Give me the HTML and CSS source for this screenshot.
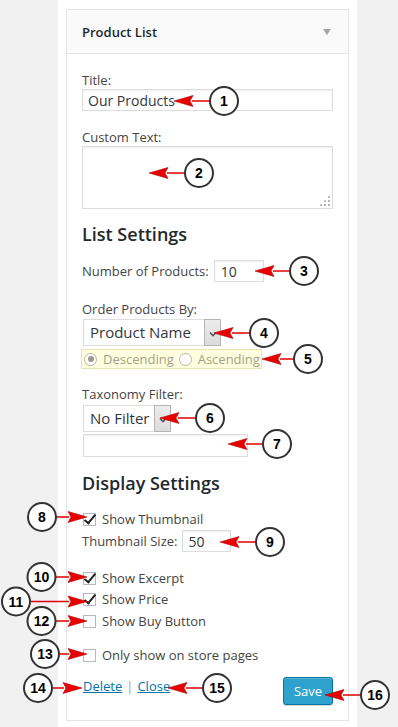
FILE: index.html
```html
<!DOCTYPE html>
<html lang="en">
<head>
  <meta charset="UTF-8" />
  <title>Product List widget</title>
  <link rel="stylesheet" href="styles.css">
</head>
<body>
<div class="page">
  <div class="column">
    <div class="widget">
      <div class="widget-top">
        <h3 class="widget-title">Product List</h3>
        <span class="toggle"></span>
      </div>

      <div class="widget-inside">
        <label class="label">Title:</label>
        <input class="text-input wide" type="text" value="Our Products">

        <label class="label gap-lg">Custom Text:</label>
        <div class="textarea"><span class="grip"></span></div>

        <h4 class="section-title">List Settings</h4>
        <div class="inline-row gap-num">
          <label>Number of Products:</label>
          <input class="text-input small num" type="text" value="10">
        </div>

        <label class="label gap-order">Order Products By:</label>
        <div class="select order-select">
          <span class="select-value">Product Name</span>
          <span class="select-btn"><svg width="8" height="6" viewBox="0 0 8 6"><polyline points="1,1.5 4,4.5 7,1.5" fill="none" stroke="#555" stroke-width="1.6"/></svg></span>
        </div>
        <div class="radio-box">
          <span class="radio checked"></span><span class="radio-text">Descending</span>
          <span class="radio"></span><span class="radio-text">Ascending</span>
        </div>

        <label class="label gap-tax">Taxonomy Filter:</label>
        <div class="select tax-select">
          <span class="select-value">No Filter</span>
          <span class="select-btn"><svg width="8" height="6" viewBox="0 0 8 6"><polyline points="1,1.5 4,4.5 7,1.5" fill="none" stroke="#555" stroke-width="1.6"/></svg></span>
        </div>
        <input class="text-input term-input" type="text" value="">

        <h4 class="section-title gap-display">Display Settings</h4>
        <div class="check-row gap-thumb"><span class="check on"></span>Show Thumbnail</div>
        <div class="inline-row gap-size">
          <label>Thumbnail Size:</label>
          <input class="text-input small thumb" type="text" value="50">
        </div>
        <div class="check-row gap-excerpt"><span class="check on"></span>Show Excerpt</div>
        <div class="check-row gap-price"><span class="check on"></span>Show Price</div>
        <div class="check-row gap-buy"><span class="check"></span>Show Buy Button</div>
        <div class="check-row gap-store"><span class="check"></span>Only show on store pages</div>

        <div class="widget-actions">
          <div class="links"><a href="#">Delete</a><span class="sep">|</span><a href="#">Close</a></div>
          <button class="btn-save">Save</button>
        </div>
      </div>
    </div>
  </div>

  <svg id="callouts" class="callouts" width="398" height="727" viewBox="0 0 398 727"></svg>
</div>

<script>
  // callout: [number, circleX, circleY, arrowTipX]
  const callouts = [
    [1, 224, 101, 174], [2, 199, 173, 149], [3, 304, 271, 255],
    [4, 264, 333, 214], [5, 308, 359, 262], [6, 210, 418, 160],
    [7, 277, 444, 228], [8, 42, 517, 87],   [9, 270, 542, 220],
    [10, 41.5, 577, 87], [11, 16, 601.5, 87], [12, 41.5, 621, 87],
    [13, 45, 654, 87],  [14, 38, 688, 82],  [15, 217, 688, 168],
    [16, 375, 695, 325]
  ];
  const svg = document.getElementById('callouts');
  const NS = 'http://www.w3.org/2000/svg';
  const R = 14, HEAD = 19, HALF = 5.5;

  function el(tag, attrs, text){
    const n = document.createElementNS(NS, tag);
    for (const k in attrs) n.setAttribute(k, attrs[k]);
    if (text !== undefined) n.textContent = text;
    svg.appendChild(n);
    return n;
  }

  callouts.forEach(([num, cx, cy, tip]) => {
    const dir = cx > tip ? 1 : -1;        // 1: circle on the right, arrow points left
    const base = tip + dir * HEAD;
    const edge = cx - dir * R;
    el('line', { x1: base - dir, y1: cy, x2: edge, y2: cy, class: 'co-line' });
    el('polygon', { points: `${tip},${cy} ${base},${cy - HALF} ${base - dir * 3},${cy} ${base},${cy + HALF}`, class: 'co-head' });
    el('circle', { cx, cy, r: R, class: 'co-circle' });
    el('text', { x: cx, y: cy + 5, class: 'co-num' }, num);
  });
</script>
</body>
</html>
```

FILE: styles.css
```css
* { box-sizing: border-box; }
html, body { margin: 0; }
body {
  background: #f1f1f1;
  font-family: "Open Sans", "Liberation Sans", sans-serif;
  font-size: 13px;
  line-height: 18px;
  color: #444;
}

.page { position: relative; width: 398px; height: 727px; overflow: hidden; }
.column { margin-left: 58px; width: 299px; min-height: 727px; background: #fff; padding: 9px 8px 0; }

.widget { border: 1px solid #e5e5e5; background: #fff; }
.widget-top {
  height: 44px;
  background: #fafafa;
  border-bottom: 1px solid #e5e5e5;
  display: flex;
  align-items: center;
  justify-content: space-between;
  padding: 1px 17px 0 15px;
}
.widget-title { margin: 0; font-size: 13px; font-weight: 600; color: #23282d; }
.toggle { width: 0; height: 0; border-left: 4px solid transparent; border-right: 4px solid transparent; border-top: 6px solid #a0a5aa; }

.widget-inside { padding: 17px 15px 15px; display: flex; flex-direction: column; }

.label { display: block; }
.gap-lg { margin-top: 17px; }
.gap-order { margin-top: 18px; }
.gap-tax { margin-top: 16px; }

/* inputs */
.text-input {
  display: block;
  height: 22px;
  margin: 0;
  border: 1px solid #ddd;
  padding: 0 5px;
  font-family: inherit;
  font-size: 14px;
  color: #32373c;
  background: #fff;
  box-shadow: inset 0 1px 2px rgba(0,0,0,.07);
  outline: none;
}
.text-input.wide { width: 100%; }
.text-input.small { width: 50px; }
.text-input.num { padding-left: 6px; }
.text-input.thumb { width: 49px; }
.term-input { width: 165px; height: 23px; margin-top: 2px; margin-left: 1px; }

.textarea {
  position: relative;
  height: 63px;
  border: 1px solid #ddd;
  box-shadow: inset 0 1px 2px rgba(0,0,0,.07);
}
.grip {
  position: absolute;
  right: 2px;
  bottom: 2px;
  width: 11px;
  height: 11px;
  background:
    radial-gradient(circle, #b5b5b5 1.1px, transparent 1.3px) 0 0 / 4px 4px;
  clip-path: polygon(100% 0, 100% 100%, 0 100%);
}

.section-title {
  margin: 13px 0 0;
  font-size: 18px;
  line-height: 24px;
  font-weight: 600;
  color: #23282d;
}
.gap-display { margin-top: 14px; }

.inline-row { display: flex; align-items: center; gap: 5px; }
.gap-num { margin-top: 14px; }
.gap-size { margin-top: 2px; }

/* fake selects */
.select {
  display: flex;
  height: 27px;
  margin-top: 1px;
  margin-left: 1px;
  border: 1px solid #ddd;
  background: #fff;
  font-size: 15px;
  color: #32373c;
}
.order-select { width: 138px; }
.tax-select { width: 88px; margin-top: 2px; }
.select-value { flex: 1; padding-left: 6px; line-height: 25px; }
.select-btn {
  width: 17px;
  display: flex;
  align-items: center;
  justify-content: center;
  padding-top: 2px;
  background: linear-gradient(#ececec, #dcdcdc);
  border: 1px solid #b5b5b5;
  margin: -1px -1px -1px 0;
}

.radio-box {
  display: flex;
  align-items: center;
  width: 181px;
  height: 20px;
  margin-top: 3px;
  margin-left: -1px;
  padding-left: 2px;
  background: #ffffe0;
  border: 1px solid #e6e6b3;
  color: #a3a188;
  font-size: 13px;
  white-space: nowrap;
}
.radio {
  flex-shrink: 0;
  width: 13px;
  height: 13px;
  border: 1px solid #b9b8a6;
  border-radius: 50%;
  background: #fff;
  position: relative;
  margin-right: 6px;
}
.radio.checked::after {
  content: "";
  position: absolute;
  left: 2.5px;
  top: 2.5px;
  width: 6px;
  height: 6px;
  border-radius: 50%;
  background: #9a9a8a;
}
.radio-text { margin-right: 5px; }

/* checkboxes */
.check-row { display: flex; align-items: center; }
.check {
  flex-shrink: 0;
  position: relative;
  width: 13px;
  height: 13px;
  margin: 0 6px 0 1px;
  border: 1px solid #b4b9be;
  background: #fff;
}
.check.on::after {
  content: "";
  position: absolute;
  left: 3px;
  top: -2px;
  width: 4px;
  height: 10px;
  border: solid #1e1e1e;
  border-width: 0 2.5px 2.5px 0;
  transform: rotate(40deg);
}
.gap-thumb { margin-top: 15px; }
.gap-excerpt { margin-top: 17px; }
.gap-price { margin-top: 3px; }
.gap-buy { margin-top: 4px; }
.gap-store { margin-top: 16px; }

/* footer */
.widget-actions { display: flex; justify-content: space-between; align-items: flex-start; margin-top: 13px; }
.links { padding-left: 1px; }
.links a { color: #0073aa; text-decoration: underline; }
.sep { color: #999; margin: 0 4px; }
.btn-save {
  width: 50px;
  height: 28px;
  padding: 0;
  font-family: inherit;
  font-size: 13px;
  color: #fff;
  background: #2ea2cc;
  border: 1px solid #0074a2;
  border-radius: 3px;
  box-shadow: inset 0 1px 0 rgba(120,200,230,.5), 0 1px 0 rgba(0,0,0,.15);
}

/* annotation callouts */
.callouts { position: absolute; top: 0; left: 0; pointer-events: none; }
.co-line { stroke: #e00000; stroke-width: 1.5; }
.co-head { fill: #e80000; stroke: #b00000; stroke-width: .6; }
.co-circle { fill: #fff; stroke: #333; stroke-width: 2; }
.co-num { font-family: "Liberation Sans", Arial, sans-serif; font-size: 14px; font-weight: bold; fill: #000; text-anchor: middle; }
```
